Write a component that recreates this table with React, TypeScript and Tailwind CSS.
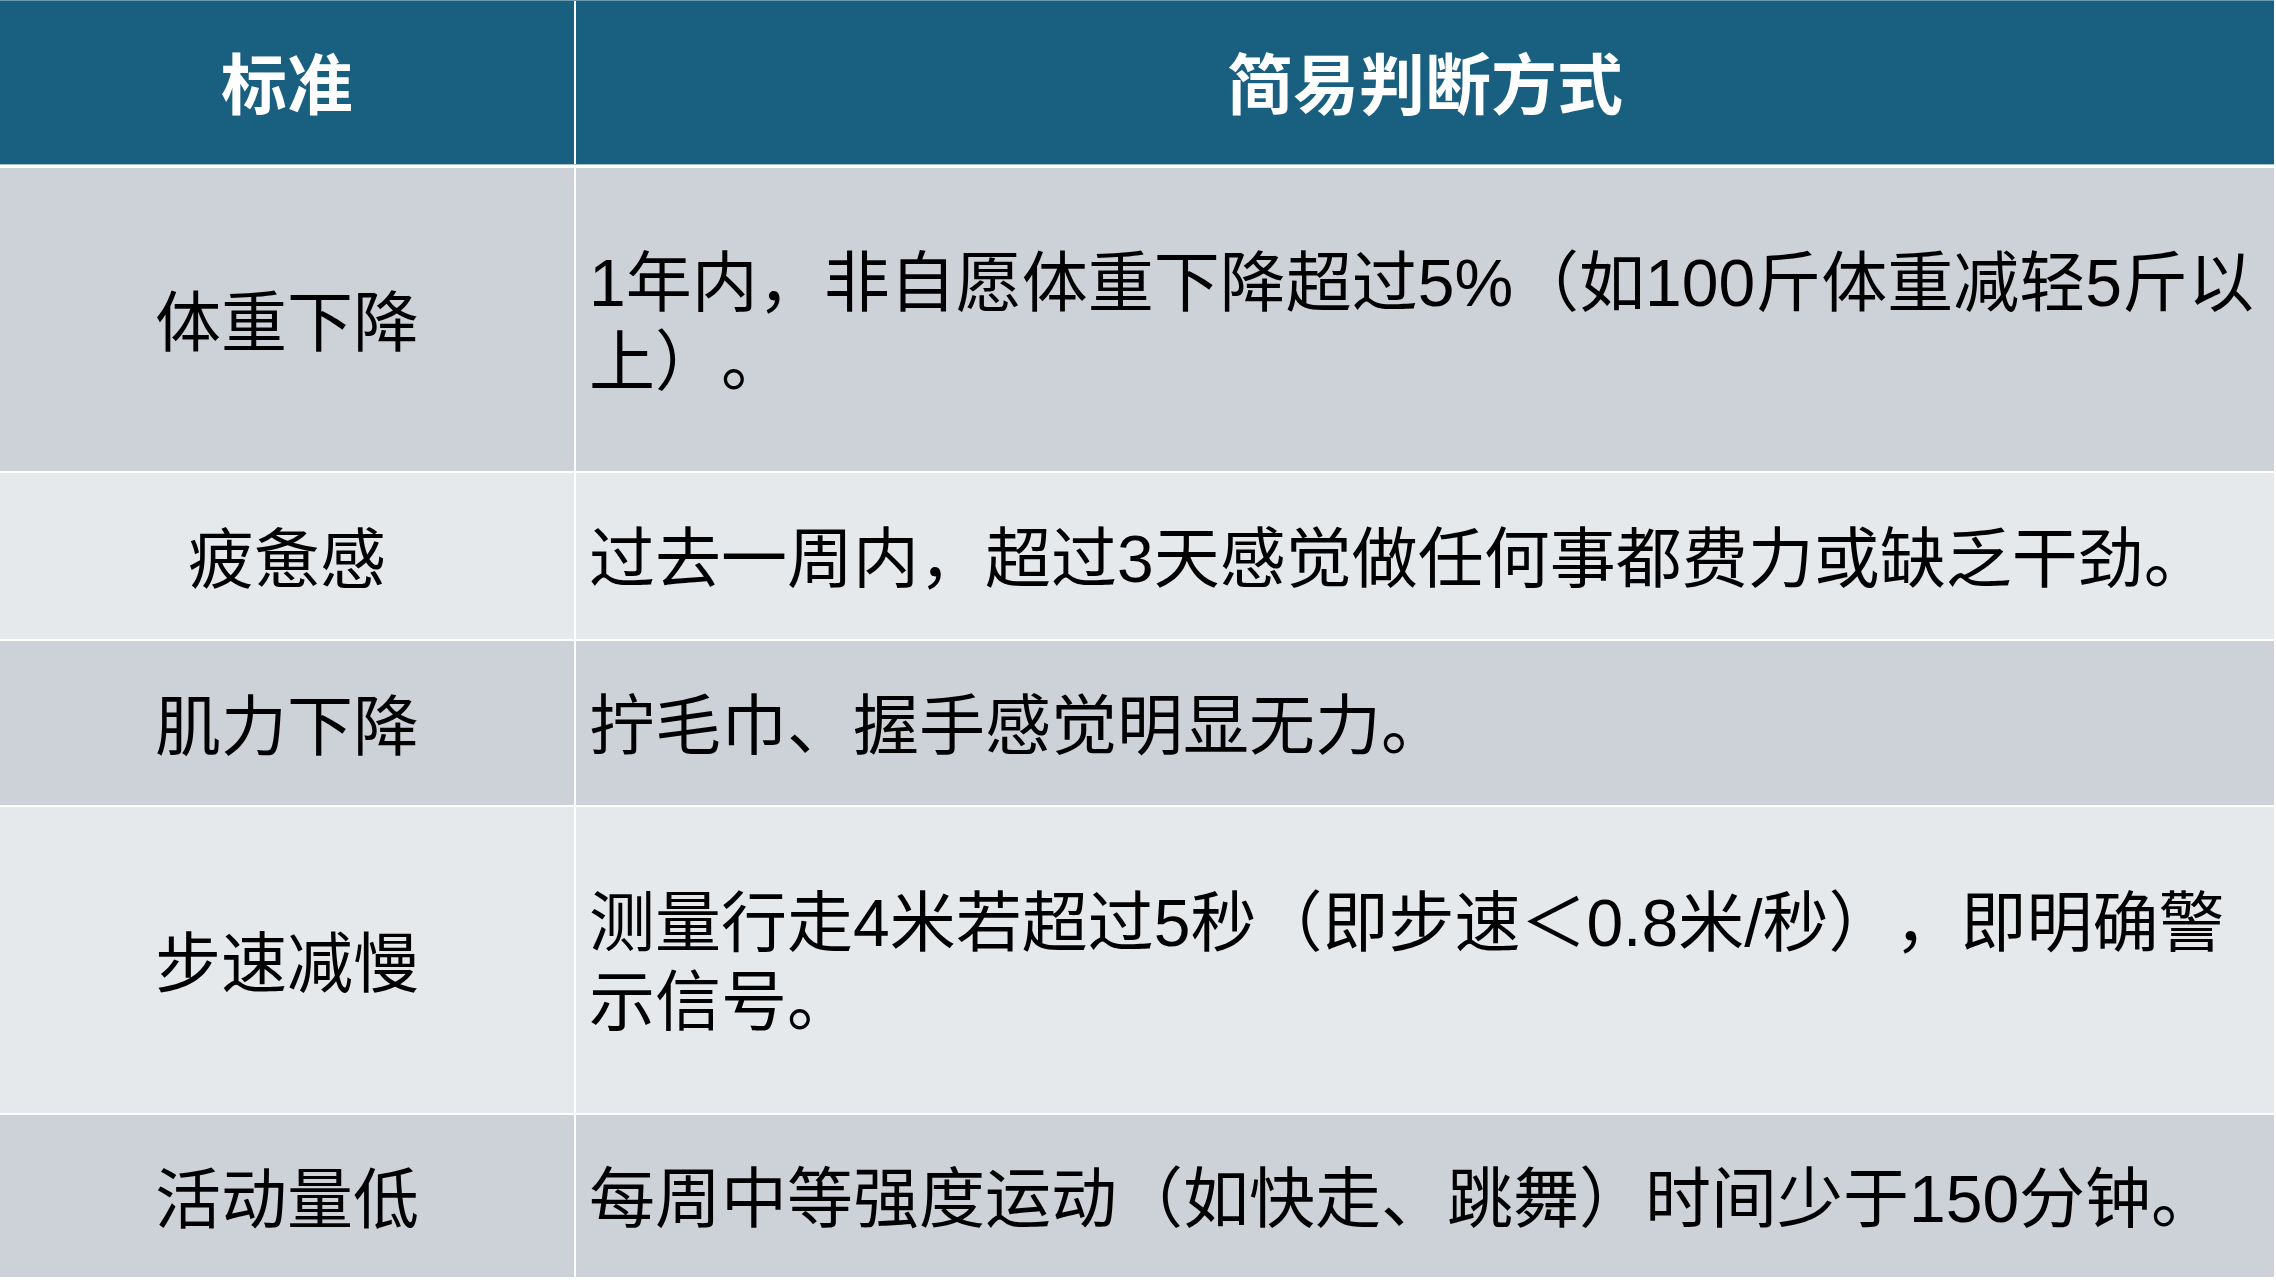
import React from "react";

const FONT = { fontFamily: '"Liberation Sans", "Noto Sans CJK SC", sans-serif' };

interface Row {
  label: string;
  lines: string[];
  height: string;
  shade: "dark" | "light";
}

const rows: Row[] = [
  {
    label: "体重下降",
    lines: ["1年内，非自愿体重下降超过5%（如100斤体重减轻5斤以", "上）。"],
    height: "h-[303px]",
    shade: "dark",
  },
  {
    label: "疲惫感",
    lines: ["过去一周内，超过3天感觉做任何事都费力或缺乏干劲。"],
    height: "h-[166px]",
    shade: "light",
  },
  {
    label: "肌力下降",
    lines: ["拧毛巾、握手感觉明显无力。"],
    height: "h-[164px]",
    shade: "dark",
  },
  {
    label: "步速减慢",
    lines: ["测量行走4米若超过5秒（即步速＜0.8米/秒），即明确警", "示信号。"],
    height: "h-[306px]",
    shade: "light",
  },
  {
    label: "活动量低",
    lines: ["每周中等强度运动（如快走、跳舞）时间少于150分钟。"],
    height: "h-[162px]",
    shade: "dark",
  },
];

export default function App() {
  return (
    <div
      className="h-[1280px] w-[2276px] overflow-hidden bg-white [text-spacing-trim:space-all]"
      style={FONT}
    >
      <div className="flex w-[2274px] flex-col">
        {/* header */}
        <div className="flex h-[164px] gap-[2px] border-t border-[#6f9bb2]">
          <div className="flex w-[574px] items-center justify-center bg-[#185f80] pt-[8px] text-[66px] font-bold text-white">
            标准
          </div>
          <div className="flex flex-1 items-center justify-center bg-[#185f80] pt-[8px] text-[66px] font-bold text-white">
            简易判断方式
          </div>
        </div>
        <div className="h-px bg-[#a9c2cf]" />
        <div className="h-[3px]" />

        {rows.map((r, i) => {
          const bg = r.shade === "dark" ? "bg-[#cdd2d9]" : "bg-[#e6e9ec]";
          return (
            <div key={r.label} className={`flex gap-[2px] ${r.height} ${i > 0 ? "mt-[2px]" : ""}`}>
              <div
                className={`flex w-[574px] items-center justify-center pt-[8px] text-[66px] leading-[79px] text-black ${bg}`}
              >
                {r.label}
              </div>
              <div
                className={`flex flex-1 items-center pl-[13px] pt-[6px] text-[66px] leading-[79px] text-black ${bg}`}
              >
                <div>
                  {r.lines.map((l) => (
                    <div key={l} className="whitespace-nowrap">
                      {l}
                    </div>
                  ))}
                </div>
              </div>
            </div>
          );
        })}
      </div>
    </div>
  );
}
